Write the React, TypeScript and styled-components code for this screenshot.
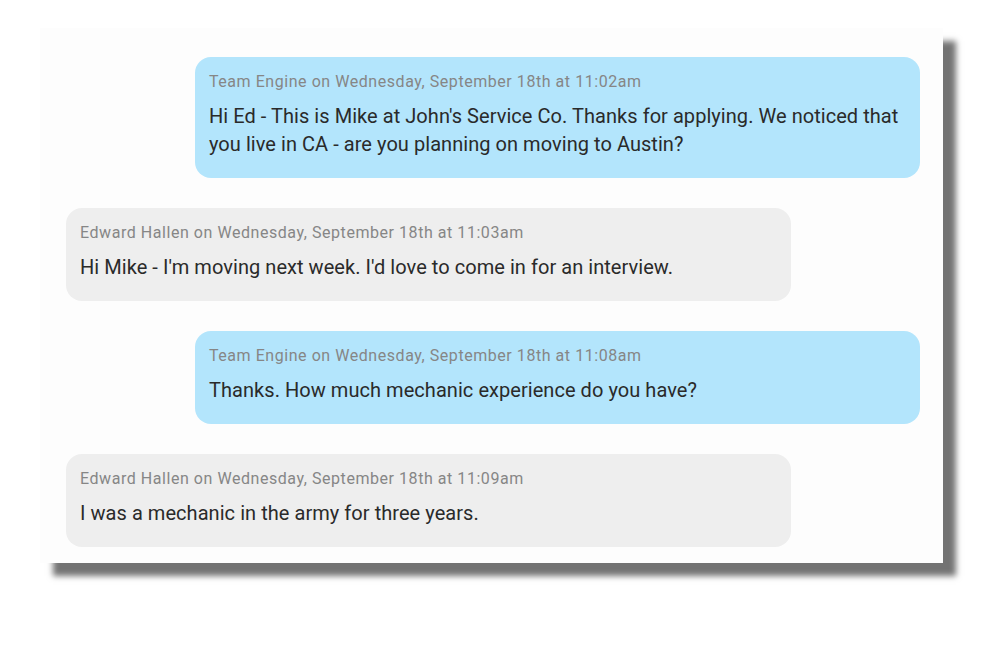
import React from "react";
import styled, { createGlobalStyle } from "styled-components";

const Global = createGlobalStyle`
  html, body { margin: 0; padding: 0; background: #ffffff; }
  body { font-family: Roboto, "Noto Sans", "Liberation Sans", sans-serif; }
`;

const Page = styled.div`
  width: 1000px;
  height: 646px;
  padding: 28px 0 0 40px;
  box-sizing: border-box;
`;

const Card = styled.div`
  width: 903px;
  box-sizing: border-box;
  background: #fdfdfd;
  box-shadow: 13px 13px 6px rgba(0, 0, 0, 0.55);
  padding: 29px 23px 16px 26px;
  display: flex;
  flex-direction: column;
  gap: 30px;
`;

const Bubble = styled.div<{ $mine?: boolean }>`
  width: 725px;
  box-sizing: border-box;
  align-self: ${(p) => (p.$mine ? "flex-end" : "flex-start")};
  background: ${(p) => (p.$mine ? "#b3e5fc" : "#eeeeee")};
  border-radius: 16px;
  padding: 15px 14px 20px 14px;
`;

const Meta = styled.div`
  font-size: 16px;
  line-height: 20px;
  letter-spacing: 0.55px;
  color: #868686;
  margin-bottom: 10px;
`;

const Body = styled.div`
  font-size: 20px;
  line-height: 28px;
  letter-spacing: 0.05px;
  color: #2a2a2a;
`;

const messages = [
  {
    mine: true,
    meta: "Team Engine on Wednesday, September 18th at 11:02am",
    body: "Hi Ed - This is Mike at John's Service Co. Thanks for applying. We noticed that you live in CA - are you planning on moving to Austin?",
  },
  {
    mine: false,
    meta: "Edward Hallen on Wednesday, September 18th at 11:03am",
    body: "Hi Mike - I'm moving next week. I'd love to come in for an interview.",
  },
  {
    mine: true,
    meta: "Team Engine on Wednesday, September 18th at 11:08am",
    body: "Thanks. How much mechanic experience do you have?",
  },
  {
    mine: false,
    meta: "Edward Hallen on Wednesday, September 18th at 11:09am",
    body: "I was a mechanic in the army for three years.",
  },
];

export default function App() {
  return (
    <Page>
      <Global />
      <Card>
        {messages.map((m, i) => (
          <Bubble key={i} $mine={m.mine}>
            <Meta>{m.meta}</Meta>
            <Body>{m.body}</Body>
          </Bubble>
        ))}
      </Card>
    </Page>
  );
}
